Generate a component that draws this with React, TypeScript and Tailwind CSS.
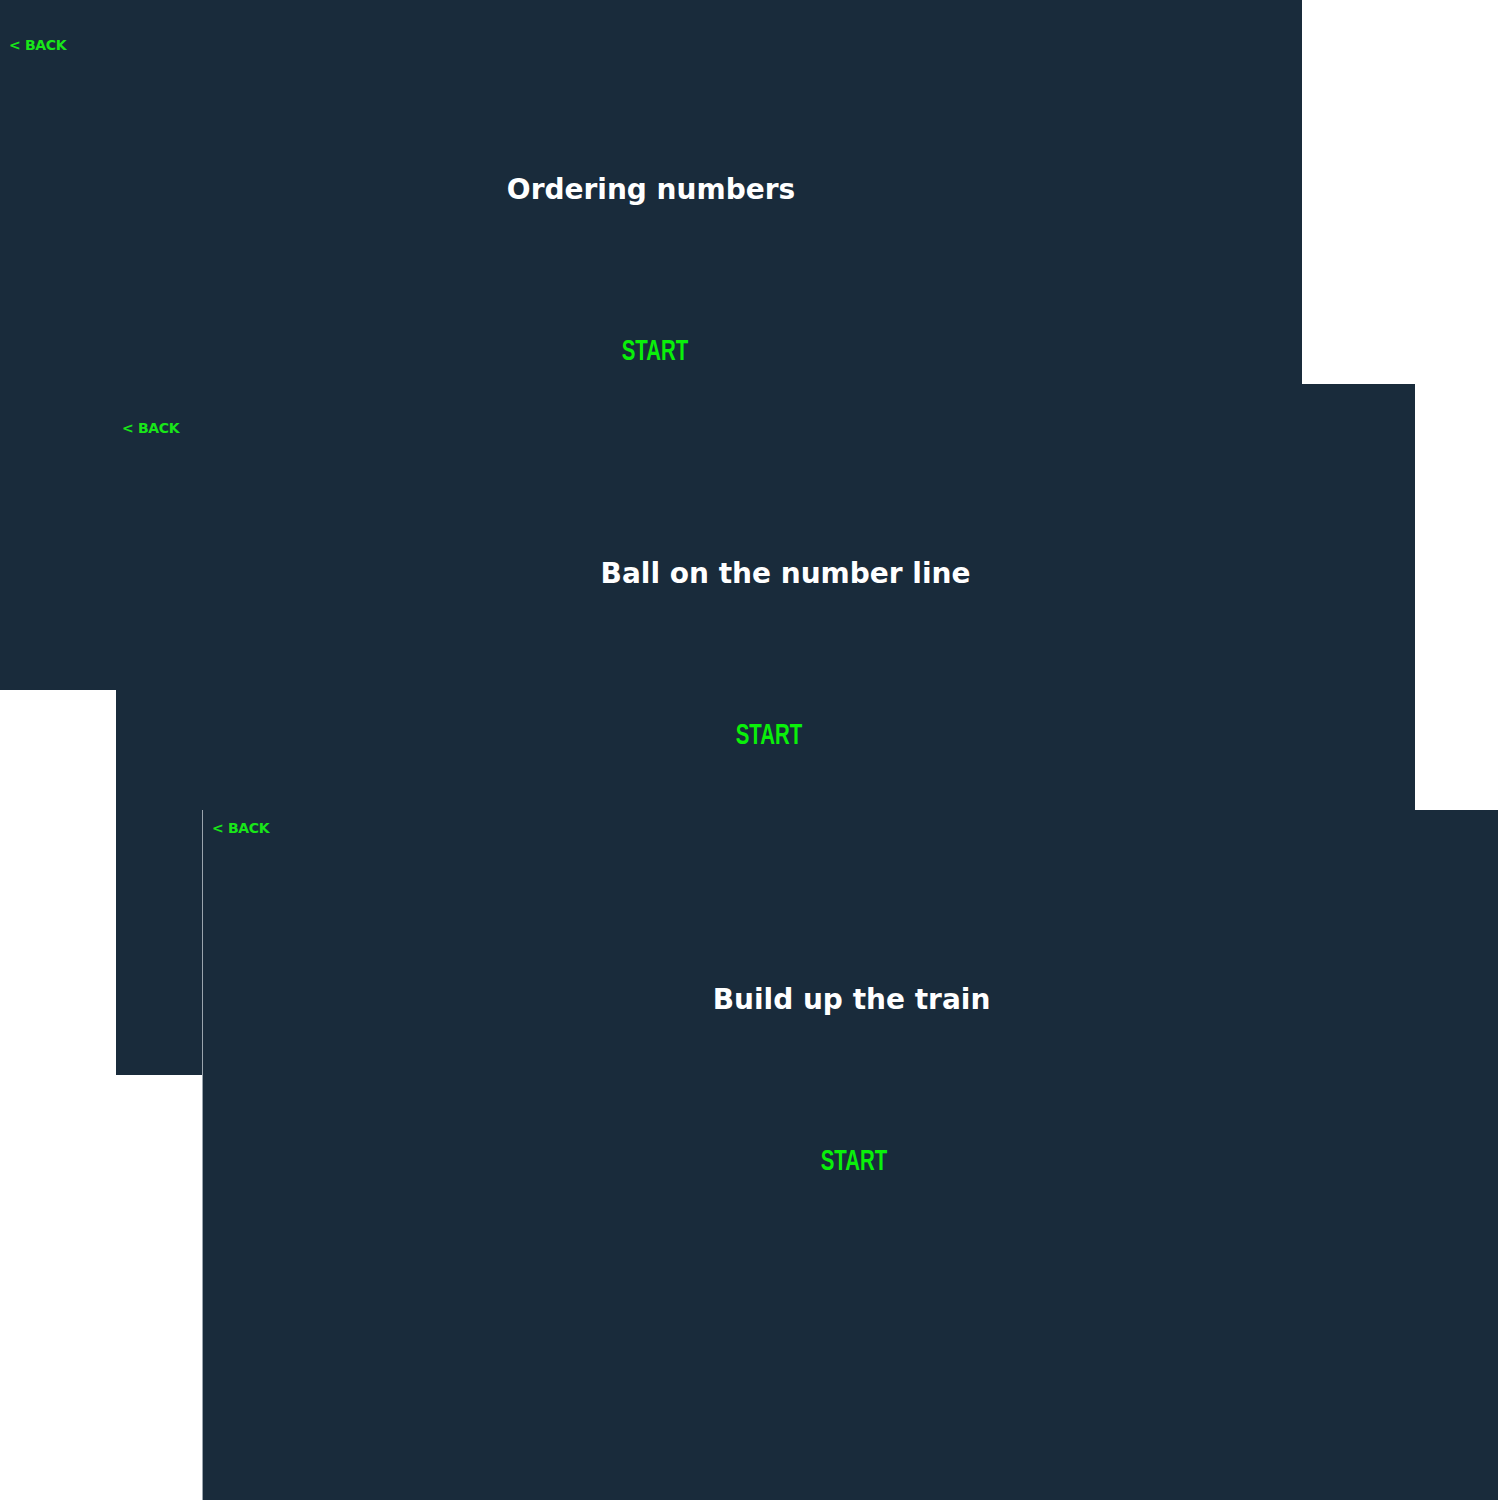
const screens = [
  { title: "Ordering numbers", pos: "left-0 top-0 w-[1302px] h-[690px]", back: "pt-[32px] pl-[9px]", edge: "", shift: "" },
  { title: "Ball on the number line", pos: "left-[116px] top-[384px] w-[1299px] h-[691px]", back: "pt-[31px] pl-[6px]", edge: "", shift: "pl-[40px]" },
  { title: "Build up the train", pos: "left-[202px] top-[810px] w-[1296px] h-[690px]", back: "pt-[5px] pl-[9px]", edge: "border-l border-[#9aa4ad]", shift: "pl-[2px]" },
];

function GameScreen({ title, pos, back, edge, shift }: { title: string; pos: string; back: string; edge: string; shift: string }) {
  return (
    <div className={`absolute ${pos} ${edge} bg-[#192b3b] flex flex-col`}>
      <div className={`h-[55px] ${back}`}>
        <button className="h-5 text-[14px] font-bold text-[#19e619] leading-5 font-['DejaVu_Sans',sans-serif] tracking-tight">
          &lt; BACK
        </button>
      </div>
      <h1 className={`mt-[117px] h-9 leading-9 text-center text-white text-[28px] font-bold font-['DejaVu_Sans',sans-serif] ${shift}`}>
        {title}
      </h1>
      <div className="mt-[124px] pl-[7px] flex justify-center">
        <button className="h-9 leading-9 text-[30px] font-bold text-[#0af00a] font-['Liberation_Sans',sans-serif] scale-x-[0.68]">
          START
        </button>
      </div>
    </div>
  );
}

export default function App() {
  return (
    <div className="relative w-[1500px] h-[1500px] bg-white overflow-hidden">
      {screens.map((s) => (
        <GameScreen key={s.title} {...s} />
      ))}
    </div>
  );
}
